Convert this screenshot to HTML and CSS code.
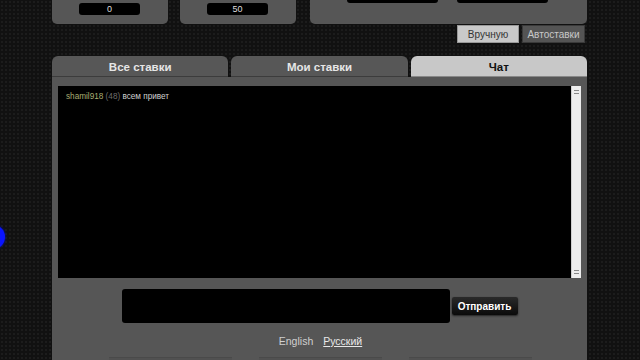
FILE: index.html
```html
<!DOCTYPE html>
<html>
<head>
<meta charset="utf-8">
<link rel="stylesheet" href="styles.css">
</head>
<body>
<div class="dot"></div>
<div class="wrap">
  <div class="top">
    <div class="tpanel small"><div class="tinput">0</div></div>
    <div class="tpanel small second"><div class="tinput">50</div></div>
    <div class="tpanel big"><div class="binput"></div><div class="binput"></div></div>
  </div>
  <div class="modes">
    <button class="mode active">Вручную</button>
    <button class="mode">Автоставки</button>
  </div>
  <div class="tabs">
    <div class="tab">Все ставки</div>
    <div class="tab">Мои ставки</div>
    <div class="tab active">Чат</div>
  </div>
  <div class="panel">
    <div class="chat">
      <div class="messages">
        <div class="msg"><span class="user">shamil918</span> <span class="lvl">(48)</span> <span class="text">всем привет</span></div>
      </div>
      <div class="scroll"><span class="arr up"></span><span class="arr down"></span></div>
    </div>
    <div class="send">
      <div class="field"></div>
      <button class="sendbtn">Отправить</button>
    </div>
    <div class="langs">
      <a class="lang">English</a>
      <a class="lang cur">Русский</a>
    </div>
    <div class="boxes">
      <div class="box"></div><div class="box"></div><div class="box"></div>
    </div>
  </div>
</div>
</body>
</html>
```
FILE: styles.css
```css
html, body { margin: 0; padding: 0; }
body {
  width: 640px; height: 360px; overflow: hidden;
  background-color: #111;
  background-image: radial-gradient(#1c1c1c 1px, transparent 1.2px);
  background-size: 4px 4px;
  font-family: "Liberation Sans", Arial, sans-serif;
  position: relative;
}
.dot {
  position: absolute; left: -18px; top: 225px;
  width: 23px; height: 24px; border-radius: 50%;
  background: #0a14ff;
  box-shadow: 0 0 3px #0010c0;
}
.wrap { margin-left: 52px; width: 535px; }
.top { display: flex; height: 24px; }
.tpanel {
  background: #565656; border-radius: 0 0 5px 5px; height: 24px;
  box-sizing: border-box;
}
.small { width: 116px; padding: 3px 0 0 27px; }
.second { margin-left: 12px; }
.big { width: 277px; margin-left: 14px; display: flex; gap: 19px; padding-left: 37px; }
.tinput {
  width: 61px; height: 12px; background: #000; border-radius: 3px;
  color: #ddd; font-size: 9px; line-height: 12px; text-align: center;
}
.binput { width: 91px; height: 3px; background: #000; border-radius: 0 0 3px 3px; }
.modes { display: flex; justify-content: flex-end; gap: 3px; margin-top: 1px; padding-right: 2px; }
.mode {
  height: 18px; border: 0; margin: 0; padding: 0; font-family: inherit;
  font-size: 10px; background: #545454; color: #c8c8c8; width: 63px;
  border: 1px solid #3a3a3a; box-sizing: border-box;
}
.mode.active { background: #c9c9c9; color: #333; width: 62px; border-color: #999; }
.tabs { display: flex; gap: 3px; margin-top: 13px; height: 21px; }
.tab {
  flex: 1; background: #575757; border-radius: 6px 6px 0 0;
  color: #e6e6e6; font-weight: bold; font-size: 11.5px;
  text-align: center; line-height: 22px;
  border-bottom: 1px solid #3c3c3c; box-sizing: border-box;
}
.tab.active { background: #c8c8c8; color: #111; border-bottom-color: #888; }
.panel { background: #565656; padding: 9px 6px 0 6px; height: 290px; box-sizing: border-box; }
.chat { display: flex; height: 192px; background: #000; }
.messages { flex: 1; padding: 5px 8px; }
.msg { font-size: 8.2px; line-height: 11px; }
.user { color: #a9ad72; }
.lvl { color: #6e6e6e; }
.text { color: #cfcfcf; }
.scroll { width: 9px; background: #ededed; position: relative; border-left: 1px solid #cfcfcf; }
.arr { position: absolute; left: 2px; width: 5px; height: 2px; border-top: 1px solid #888; border-bottom: 1px solid #888; }
.arr.up { top: 4px; }
.arr.down { bottom: 4px; }
.send { display: flex; align-items: center; justify-content: center; gap: 2px; margin-top: 11px; }
.field { width: 328px; height: 34px; background: #000; border-radius: 3px; }
.sendbtn {
  width: 66px; height: 18px; border: 0; margin: 0; padding: 0;
  background: linear-gradient(#2a2a2a, #0a0a0a); border-radius: 2px;
  color: #fff; font-family: inherit; font-weight: bold; font-size: 10px;
  box-shadow: 0 1px 2px #222;
}
.langs { display: flex; justify-content: center; gap: 10px; margin-top: 12px; padding-left: 2px; font-size: 10.5px; line-height: 12px; }
.lang { color: #d0d0d0; }
.lang.cur { text-decoration: underline; color: #e8e8e8; }
.boxes { display: flex; gap: 27px; margin-top: 10px; padding-left: 51px; }
.box { width: 123px; height: 6px; background: #515151; border-top: 1px solid #4a4a4a; }
```
